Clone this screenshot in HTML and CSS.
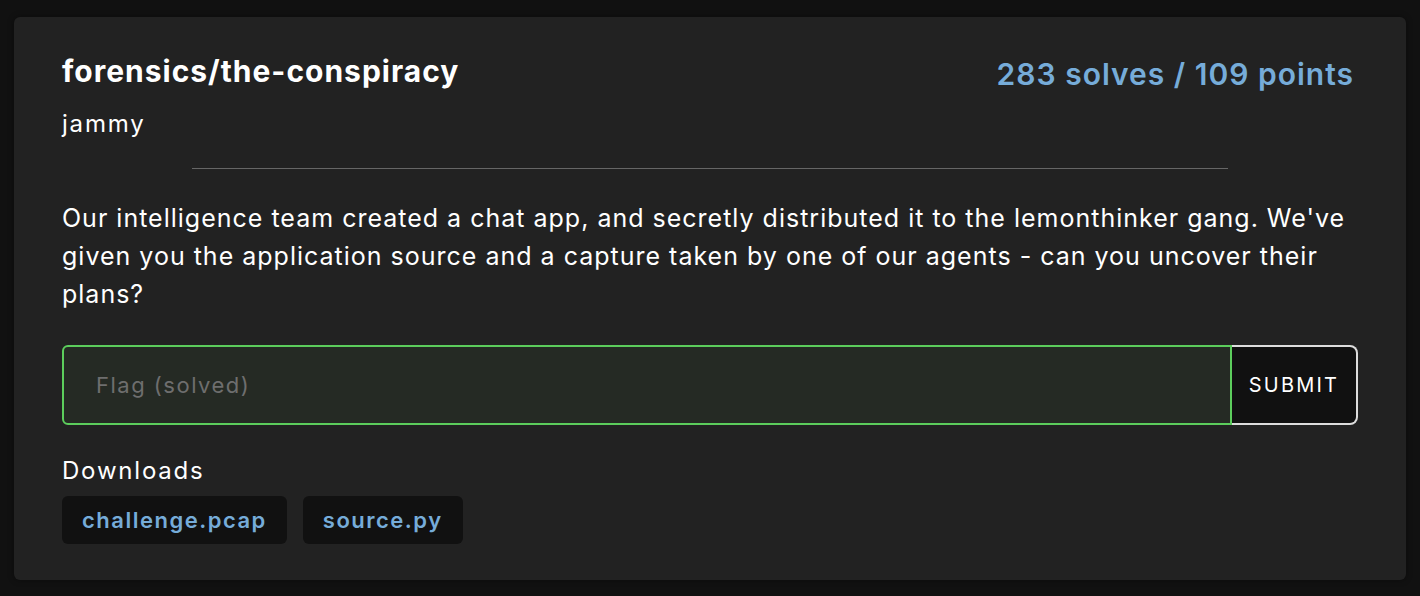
FILE: index.html
```html
<!DOCTYPE html>
<html>
<head>
<meta charset="utf-8">
<link rel="stylesheet" href="styles.css">
</head>
<body>
<div class="page">
  <section class="card">
    <div class="head">
      <div class="titles">
        <h1 class="title">forensics/the-conspiracy</h1>
        <div class="author">jammy</div>
      </div>
      <div class="stats">283 solves / 109 points</div>
    </div>
    <hr class="divider">
    <p class="desc">Our intelligence team created a chat app, and secretly distributed it to the lemonthinker gang. We've given you the application source and a capture taken by one of our agents - can you uncover their plans?</p>
    <form class="flag-form">
      <input class="flag-input" type="text" placeholder="Flag (solved)">
      <button class="submit" type="button">SUBMIT</button>
    </form>
    <div class="downloads-label">Downloads</div>
    <div class="downloads">
      <a class="dl" href="#">challenge.pcap</a>
      <a class="dl" href="#">source.py</a>
    </div>
  </section>
</div>
</body>
</html>
```
FILE: styles.css
```css
html, body {
  margin: 0;
  padding: 0;
  background: #111111;
  font-family: Inter, "Noto Sans", sans-serif;
  color: #ffffff;
}
.page {
  padding: 17px 14px 15px 14px;
}
.card {
  background: #222222;
  border-radius: 6px;
  padding: 36px 48px 36px 48px;
  box-shadow: 0 0 6px rgba(0,0,0,0.4);
}
.head {
  display: flex;
  justify-content: space-between;
  align-items: flex-start;
}
.title {
  margin: 0;
  font-size: 30px;
  font-weight: 700;
  line-height: 36px;
  letter-spacing: 1px;
}
.author {
  margin-top: 20px;
  font-size: 24px;
  line-height: 30px;
  letter-spacing: 1.8px;
}
.stats {
  margin-top: 3px;
  margin-right: 4px;
  color: #76acd9;
  font-size: 30px;
  font-weight: 600;
  line-height: 36px;
  letter-spacing: 1px;
}
.divider {
  width: 80%;
  margin: 29px auto 30px auto;
  border: 0;
  border-top: 1px solid #666666;
}
.desc {
  margin: 0;
  font-size: 25px;
  line-height: 38px;
  letter-spacing: 1px;
}
.flag-form {
  display: flex;
  margin-top: 32px;
  height: 80px;
}
.flag-input {
  flex: 1;
  min-width: 0;
  box-sizing: border-box;
  height: 80px;
  background: #252a24;
  border: 2px solid #5ccd5c;
  border-radius: 6px 0 0 6px;
  padding: 0 32px;
  font-family: Inter, "Noto Sans", sans-serif;
  font-size: 22px;
  color: #ffffff;
  outline: none;
  letter-spacing: 1px;
}
.flag-input::placeholder {
  color: #6e6e6e;
  letter-spacing: 1.5px;
}
.submit {
  box-sizing: border-box;
  width: 126px;
  height: 80px;
  background: #111111;
  border: 2px solid #dddddd;
  border-left: 0;
  border-radius: 0 8px 8px 0;
  color: #ffffff;
  font-family: Inter, "Noto Sans", sans-serif;
  font-size: 20px;
  letter-spacing: 2.2px;
  padding: 0;
}
.downloads-label {
  margin-top: 31px;
  font-size: 24px;
  line-height: 30px;
  letter-spacing: 1.8px;
}
.downloads {
  display: flex;
  gap: 16px;
  margin-top: 10px;
}
.dl {
  display: block;
  background: #111111;
  border-radius: 6px;
  padding: 0 20px;
  height: 48px;
  line-height: 48px;
  color: #76acd9;
  font-size: 22px;
  font-weight: 600;
  text-decoration: none;
  letter-spacing: 1.5px;
}
```
